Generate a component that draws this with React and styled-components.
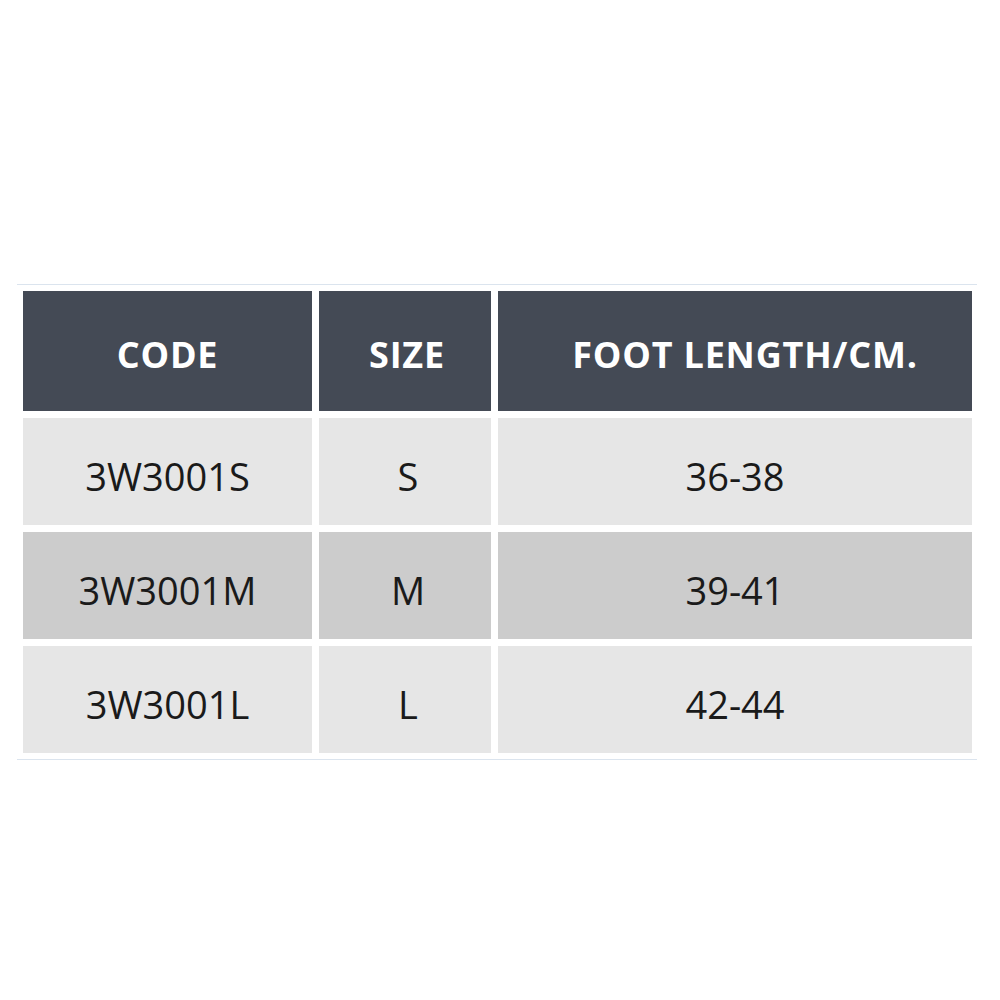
import React from 'react';
import styled, { createGlobalStyle } from 'styled-components';

const GlobalStyle = createGlobalStyle`
  html, body {
    margin: 0;
    padding: 0;
    background: #ffffff;
  }
  body {
    font-family: 'Open Sans', 'Liberation Sans', sans-serif;
  }
`;

const Page = styled.div`
  width: 1000px;
  height: 1000px;
  padding-top: 284px;
  box-sizing: border-box;
`;

const Table = styled.div`
  margin-left: 17px;
  width: 960px;
  box-sizing: border-box;
  border-top: 1px solid #dbe4ee;
  border-bottom: 1px solid #dbe4ee;
  padding: 6px 5px 6px 6px;
  display: grid;
  grid-template-columns: 289px 172px 474px;
  grid-template-rows: 120px 107px 107px 107px;
  gap: 7px;
`;

const HeadCell = styled.div`
  background: #444a55;
  color: #ffffff;
  font-weight: 700;
  font-size: 36px;
  letter-spacing: 0.8px;
  display: flex;
  align-items: center;
  justify-content: center;
  padding-top: 6px;
  padding-left: ${(p) => p.$shift || 0}px;
`;

const Cell = styled.div`
  background: ${(p) => (p.$dark ? '#cccccc' : '#e6e6e6')};
  color: #1a1a1a;
  font-size: 38px;
  display: flex;
  align-items: center;
  justify-content: center;
  padding-top: 8px;
  padding-left: ${(p) => p.$shift || 0}px;
`;

const rows = [
  ['3W3001S', 'S', '36-38'],
  ['3W3001M', 'M', '39-41'],
  ['3W3001L', 'L', '42-44'],
];

export default function App() {
  return (
    <Page>
      <GlobalStyle />
      <Table>
        <HeadCell>CODE</HeadCell>
        <HeadCell $shift={4}>SIZE</HeadCell>
        <HeadCell $shift={20}>FOOT LENGTH/CM.</HeadCell>
        {rows.map((r, i) =>
          r.map((v, j) => (
            <Cell key={`${i}-${j}`} $dark={i === 1} $shift={j === 2 ? -4 : j === 1 ? 6 : 0}>
              {v}
            </Cell>
          ))
        )}
      </Table>
    </Page>
  );
}
